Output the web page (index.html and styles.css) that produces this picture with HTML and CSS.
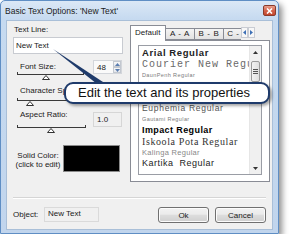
FILE: index.html
```html
<!DOCTYPE html>
<html lang="en">
<head>
  <meta charset="UTF-8">
  <meta name="viewport" content="width=device-width, initial-scale=1.0">
  <title>Basic Text Options: 'New Text'</title>
  <link rel="stylesheet" href="styles.css">
</head>
<body>
  <div class="window">
    <div class="titlebar">
      <span class="title">Basic Text Options: 'New Text'</span>
      <span class="close">
        <svg width="7" height="6" viewBox="0 0 7 6"><path d="M1 0.5 L6 5.5 M6 0.5 L1 5.5" stroke="#fff" stroke-width="1.6"/></svg>
      </span>
    </div>

    <div class="client">
      <div class="top">
        <!-- left column: text + sliders -->
        <div class="left">
          <div class="label">Text Line:</div>
          <div class="input">New Text</div>

          <div class="row font-row">
            <span class="row-label">Font Size:</span>
            <div class="spin">
              <span class="spin-value">48</span>
              <div class="spin-btns">
                <span class="spin-btn"><svg width="5" height="3" viewBox="0 0 5 3"><polygon points="2.5,0 5,3 0,3" fill="#5a7db0"/></svg></span>
                <span class="spin-btn"><svg width="5" height="3" viewBox="0 0 5 3"><polygon points="0,0 5,0 2.5,3" fill="#5a7db0"/></svg></span>
              </div>
            </div>
          </div>
          <div class="slider">
            <svg class="thumb" style="margin-left:25px" width="8" height="5" viewBox="0 0 8 5"><polygon points="4,0.5 7.5,4.5 0.5,4.5" fill="#fff" stroke="#333" stroke-width="1"/></svg>
          </div>

          <div class="row-label char-label">Character Spacing:</div>
          <div class="slider slider-2">
            <svg class="thumb" style="margin-left:9px" width="8" height="5" viewBox="0 0 8 5"><polygon points="4,0.5 7.5,4.5 0.5,4.5" fill="#fff" stroke="#333" stroke-width="1"/></svg>
          </div>

          <div class="row aspect-row">
            <span class="row-label aspect-label">Aspect Ratio:</span>
            <div class="value">1.0</div>
          </div>
          <div class="slider slider-3">
            <svg class="thumb" style="margin-left:30px" width="8" height="5" viewBox="0 0 8 5"><polygon points="4,0.5 7.5,4.5 0.5,4.5" fill="#fff" stroke="#333" stroke-width="1"/></svg>
          </div>

          <div class="color-row">
            <div class="color-label">Solid Color:<br>(click to edit)</div>
            <div class="swatch"></div>
          </div>
        </div>

        <!-- right column: font tabs -->
        <div class="tabs">
          <div class="tab-strip">
            <div class="tab-clip">
              <span class="tab active">Default</span>
              <span class="tab">A - A</span>
              <span class="tab">B - B</span>
              <span class="tab">C - C</span>
            </div>
            <span class="tab-arrow"><svg width="3" height="5" viewBox="0 0 3 5"><polygon points="3,0 3,5 0,2.5" fill="#3d6fb5"/></svg></span>
            <span class="tab-arrow"><svg width="3" height="5" viewBox="0 0 3 5"><polygon points="0,0 3,2.5 0,5" fill="#3d6fb5"/></svg></span>
          </div>
          <div class="panel">
            <div class="list">
              <div class="items">
                <div class="item f-arial">Arial Regular</div>
                <div class="item f-courier">Courier New Regular</div>
                <div class="item f-tiny">DaunPenh Regular</div>
                <div class="item f-gray">DokChampa Regular</div>
                <div class="item f-gray">Estrangelo Edessa Regular</div>
                <div class="item f-euphemia">Euphemia Regular</div>
                <div class="item f-tiny">Gautami Regular</div>
                <div class="item f-impact">Impact Regular</div>
                <div class="item f-iskoola">Iskoola Pota Regular</div>
                <div class="item f-kalinga">Kalinga Regular</div>
                <div class="item f-kartika">Kartika&nbsp; Regular</div>
              </div>
              <div class="scrollbar">
                <span class="sb-arrow"><svg width="5" height="3" viewBox="0 0 5 3"><polygon points="2.5,0 5,3 0,3" fill="#333"/></svg></span>
                <span class="sb-thumb"><span class="grip"></span></span>
                <span class="sb-track"></span>
                <span class="sb-arrow"><svg width="5" height="3" viewBox="0 0 5 3"><polygon points="0,0 5,0 2.5,3" fill="#333"/></svg></span>
              </div>
            </div>
          </div>
        </div>
      </div>

      <div class="separator"></div>

      <div class="bottom">
        <span class="object-label">Object:</span>
        <div class="object-box">New Text</div>
        <button class="btn ok">Ok</button>
        <button class="btn">Cancel</button>
      </div>
    </div>

    <!-- callout over the dialog -->
    <svg class="callout-tail" width="120" height="90" viewBox="0 0 120 90"><polygon points="52,48 96,83 105,83" fill="#1f3b6b"/></svg>
    <div class="callout">Edit the text and its properties</div>
  </div>
</body>
</html>
```

FILE: styles.css
```css
body {
  margin: 0;
  background: #fff;
  font-family: "Liberation Sans", Arial, sans-serif;
  font-size: 8px;
  color: #1a1a1a;
}

.window {
  position: relative;
  width: 279px;
  height: 234px;
  box-sizing: border-box;
  display: flex;
  flex-direction: column;
  padding: 0 5px 3px 5px;
  border: 1px solid #5f8ec4;
  border-radius: 5px 5px 0 0;
  background: linear-gradient(#dbe8f6, #c6daf0 18px, #c1d5ed);
  box-shadow: 3px 4px 6px rgba(0, 0, 0, 0.45);
}

.titlebar {
  height: 19px;
  display: flex;
  align-items: center;
  justify-content: space-between;
}
.title {
  margin-left: -1px;
  font-size: 8.5px;
  color: #1c1c1c;
}
.close {
  width: 13px;
  height: 11px;
  margin-right: -3px;
  box-sizing: border-box;
  display: flex;
  align-items: center;
  justify-content: center;
  border: 1px solid #8a3a2b;
  border-radius: 2px;
  background: linear-gradient(#e9a08d, #d4634b 50%, #c2452c);
}

.client {
  flex: 1;
  box-sizing: border-box;
  border: 1px solid #a9bfd8;
  background: #f0f0f0;
  padding: 4px 2px 0 6px;
}

.top {
  display: flex;
  align-items: flex-start;
}

/* left column */
.left {
  width: 110px;
}
.label {
  line-height: 10px;
  padding-left: 1px;
}
.input {
  margin-top: 2px;
  height: 17px;
  box-sizing: border-box;
  border: 1px solid #c8cbd1;
  background: #fff;
  padding: 3px 0 0 2px;
  line-height: 10px;
}
.row {
  display: flex;
  justify-content: space-between;
}
.row-label {
  padding-left: 7px;
  line-height: 10px;
}
.font-row {
  margin-top: 6px;
  height: 14px;
  align-items: center;
}
.spin {
  width: 29px;
  height: 14px;
  margin-right: 1px;
  box-sizing: border-box;
  display: flex;
  justify-content: space-between;
  border: 1px solid #d3d6db;
  background: #fafafa;
}
.spin-value {
  padding: 2px 0 0 3px;
  line-height: 9px;
}
.spin-btns {
  width: 8px;
  display: flex;
  flex-direction: column;
}
.spin-btn {
  flex: 1;
  display: flex;
  align-items: center;
  justify-content: center;
  border: 1px solid #c3c8d0;
  background: linear-gradient(#f7f7f7, #e4e7ec);
}

.slider {
  position: relative;
  width: 67px;
  height: 8px;
  margin-left: 4px;
  border-top: 1px solid #3a3a3a;
  box-sizing: border-box;
}
.slider::before,
.slider::after {
  content: "";
  position: absolute;
  top: -3px;
  width: 1px;
  height: 3px;
  background: #3a3a3a;
}
.slider::before { left: 0; }
.slider::after { right: 0; }
.thumb {
  display: block;
}

.char-label {
  margin-top: 4px;
}
.slider-2 {
  margin-top: 4px;
}
.aspect-row {
  margin-top: 4px;
  height: 15px;
  align-items: flex-start;
}
.aspect-label {
  margin-top: -2px;
}
.value {
  width: 29px;
  height: 15px;
  margin-right: 1px;
  box-sizing: border-box;
  border: 1px solid #d6d6d6;
  background: #f0f0f0;
  padding: 2px 0 0 3px;
  line-height: 9px;
}
.slider-3 {
  width: 69px;
}

.color-row {
  margin-top: 10px;
  display: flex;
  align-items: center;
}
.color-label {
  width: 50px;
  padding-top: 3px;
  text-align: center;
  line-height: 9px;
}
.swatch {
  width: 57px;
  height: 27px;
  box-sizing: border-box;
  border: 1px solid #8a8a8a;
  background: #000;
}

/* right column: tabs */
.tabs {
  width: 140px;
  margin-left: 7px;
}
.tab-strip {
  height: 15px;
  display: flex;
  align-items: flex-end;
}
.tab-clip {
  width: 111px;
  height: 16px;
  display: flex;
  align-items: flex-end;
  overflow: hidden;
  margin-bottom: -1px;
  position: relative;
  z-index: 1;
}
.tab {
  flex: none;
  width: 29px;
  height: 12px;
  box-sizing: border-box;
  margin-bottom: 1px;
  border: 1px solid #898c95;
  border-left: none;
  background: linear-gradient(#f4f4f4, #e2e2e2);
  text-align: center;
  line-height: 10px;
  letter-spacing: 0.6px;
}
.tab.active {
  width: 36px;
  height: 16px;
  margin-bottom: 0;
  border-left: 1px solid #898c95;
  border-bottom: none;
  background: #fff;
  text-align: left;
  padding-left: 4px;
  line-height: 13px;
  letter-spacing: 0;
}
.tab-arrow {
  width: 7px;
  height: 11px;
  margin-bottom: 2px;
  box-sizing: border-box;
  display: flex;
  align-items: center;
  justify-content: center;
  border: 1px solid #c9ccd3;
  background: #f7f7f7;
}
.panel {
  height: 142px;
  box-sizing: border-box;
  border: 1px solid #898c95;
  background: #fff;
  padding: 4px 7px 6px 7px;
}
.list {
  height: 130px;
  box-sizing: border-box;
  border: 1px solid #9a9da5;
  display: flex;
}
.items {
  flex: 1;
  overflow: hidden;
  padding: 1px 0 0 3px;
  white-space: nowrap;
}
.item {
  height: 11px;
  line-height: 11px;
  overflow: hidden;
}
.item:first-child {
  height: 12px;
  line-height: 12px;
}
.f-arial {
  font-size: 9.5px;
  font-weight: bold;
  letter-spacing: 0.6px;
  color: #222;
}
.f-courier {
  font-family: "Liberation Mono", "Courier New", monospace;
  font-size: 10px;
  letter-spacing: 1px;
  color: #6a6a6a;
}
.f-tiny {
  font-size: 5.5px;
  letter-spacing: 0.4px;
  color: #7a7a7a;
}
.f-gray {
  font-size: 8px;
  color: #888;
}
.f-euphemia {
  font-size: 8.5px;
  letter-spacing: 0.7px;
  color: #555;
}
.f-impact {
  font-size: 9px;
  font-weight: bold;
  letter-spacing: 0.4px;
  color: #000;
}
.f-iskoola {
  font-family: "Liberation Serif", "Times New Roman", serif;
  font-size: 10px;
  letter-spacing: 0.6px;
  color: #333;
}
.f-kalinga {
  font-size: 7.5px;
  letter-spacing: 0.3px;
  color: #888;
}
.f-kartika {
  font-size: 9px;
  letter-spacing: 0.5px;
  color: #222;
}

.scrollbar {
  width: 11px;
  display: flex;
  flex-direction: column;
  background: #f0f0f0;
  border-left: 1px solid #e6e6e6;
}
.sb-arrow {
  height: 12px;
  display: flex;
  align-items: center;
  justify-content: center;
}
.sb-thumb {
  height: 21px;
  margin: 3px 1px 0 1px;
  box-sizing: border-box;
  border: 1px solid #9b9b9b;
  border-radius: 2px;
  background: linear-gradient(90deg, #f3f3f3, #e0e0e0);
  display: flex;
  align-items: center;
  justify-content: center;
}
.grip {
  width: 5px;
  height: 5px;
  background: repeating-linear-gradient(#555 0 1px, transparent 1px 2px);
}
.sb-track {
  flex: 1;
}

/* bottom bar */
.separator {
  margin: 15px 4px 0 0;
  height: 1px;
  background: #d5d5d5;
  border-bottom: 1px solid #fff;
}
.bottom {
  margin: 8px 4px 0 0;
  height: 16px;
  display: flex;
  align-items: flex-start;
}
.object-label {
  width: 31px;
  line-height: 10px;
  margin-top: 3px;
}
.object-box {
  width: 55px;
  height: 15px;
  box-sizing: border-box;
  border: 1px solid #dadada;
  background: #f0f0f0;
  padding: 1px 0 0 3px;
  line-height: 9px;
}
.btn {
  width: 51px;
  height: 16px;
  margin-left: 6px;
  padding: 0;
  box-sizing: border-box;
  border: 1px solid #707070;
  border-radius: 3px;
  background: linear-gradient(#f2f2f2, #ebebeb 45%, #dddddd 50%, #cfcfcf);
  box-shadow: inset 0 0 0 1px #fcfcfc;
  font-family: "Liberation Sans", Arial, sans-serif;
  font-size: 8px;
  color: #1a1a1a;
}
.btn.ok {
  margin-left: auto;
}

/* callout */
.callout-tail {
  position: absolute;
  left: 0;
  top: 0;
  z-index: 2;
}
.callout {
  position: absolute;
  left: 63px;
  top: 81px;
  width: 206px;
  height: 22px;
  box-sizing: border-box;
  border: 2px solid #1f3b6b;
  border-radius: 9px;
  background: #fff;
  box-shadow: 2px 2px 3px rgba(0, 0, 0, 0.35);
  padding-left: 12px;
  font-size: 13px;
  line-height: 17px;
  color: #111;
  z-index: 3;
}
```
